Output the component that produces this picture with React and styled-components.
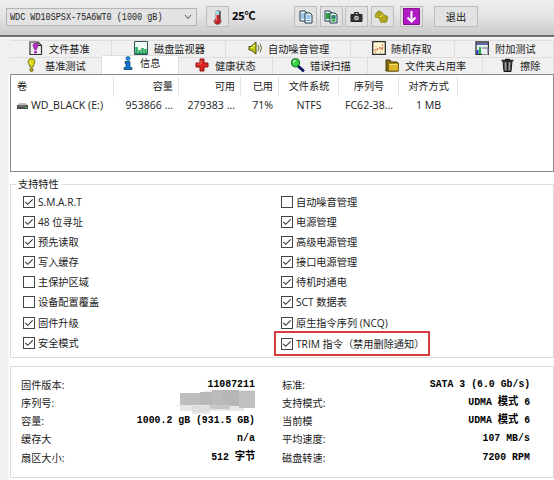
import React from 'react';
import styled, { createGlobalStyle } from 'styled-components';

const GlobalStyle = createGlobalStyle`
  * { box-sizing: border-box; }
  body {
    margin: 0;
    background: #fff;
    overflow: hidden;
    color: #222;
    font: 10.2px/14px "Open Sans", "Noto Sans CJK SC", sans-serif;
  }
`;

const Window = styled.div`
  width: 554px;
  height: 480px;
  overflow: hidden;
  white-space: nowrap;
  background: #f0f0f0;
  display: flex;
  flex-direction: column;
`;

const Toolbar = styled.header`
  height: 37px;
  flex: none;
  display: flex;
  align-items: flex-start;
  padding: 6px 0 0 6px;
  background: linear-gradient(#eeeeee, #e4e4e4 45%, #cbcbcb);
  border-bottom: 2px solid #6d6d6d;
`;

const DriveSelect = styled.div`
  width: 191px;
  height: 18px;
  margin: 2px 9px 0 0;
  padding: 0 4px 0 3px;
  display: flex;
  align-items: center;
  justify-content: space-between;
  border: 1px solid #b4b4b4;
  background: #e3e3e3;
`;

const Mono = styled.span`
  display: inline-block;
  font: ${p => (p.$bold ? 'bold 11px' : '11px')}/14px "Liberation Mono", "Noto Sans CJK SC", monospace;
  color: ${p => (p.$bold ? '#000' : '#222')};
  transform: scaleX(${p => (p.$bold ? 0.895 : 0.77)});
  transform-origin: ${p => (p.$bold ? 'right' : 'left')} center;
`;

const DriveName = styled.div`
  width: 155px;
  margin-top: -1px;
`;

const ToolButton = styled.div`
  width: ${p => p.$w || 23}px;
  height: 21px;
  margin-right: ${p => p.$gap ?? 2.5}px;
  display: flex;
  align-items: center;
  justify-content: center;
  border: 1px solid #bdbdbd;
  background: #e2e2e2;
  color: #111;
`;

const Temperature = styled.div`
  width: 62px;
  height: 21px;
  font: bold 11px/20px "Open Sans", "Noto Sans CJK SC", sans-serif;
  color: #000;
`;

const TabStrip = styled.nav`
  flex: none;
  height: 37px;
  padding: 2px 0 0 10px;
  border-top: 1px solid #fafafa;
`;

const TabRow = styled.div`
  display: flex;
  height: 17px;
`;

const Tab = styled.div`
  width: ${p => p.$w}px;
  flex: none;
  height: ${p => (p.$on ? 20 : 17)}px;
  margin-top: ${p => (p.$on ? -2 : 0)}px;
  padding-left: ${p => p.$pad}px;
  padding-bottom: ${p => (p.$on ? 5 : 1)}px;
  display: flex;
  align-items: center;
  border: solid #dedede;
  border-width: 1px 1px 0 0;
  background: ${p => (p.$on ? '#fff' : '#f0f0f0')};
`;

const TabIcon = styled.span`
  width: ${p => p.$w}px;
  height: 15px;
  flex: none;
  display: flex;
`;

const Page = styled.main`
  flex: 1;
  margin-left: 8px;
  padding: 0 0 0 2px;
  background: #fff;
  border-left: 1px solid #f7f7f7;
`;

const VolumeList = styled.section`
  height: 98px;
  margin-left: -1px;
  border: 1px solid #8a8a8a;
`;

const VolumeRow = styled.div`
  display: grid;
  grid-template-columns: 103px 65px 62px 38px 60px 60px 59px;
  height: ${p => (p.$head ? 22 : 16)}px;
  padding-top: ${p => (p.$head ? 2 : 0)}px;
`;

const Cell = styled.div`
  height: ${p => (p.$head ? 20 : 16)}px;
  padding: ${p => (p.$head ? 2 : 1)}px 5px 0 6px;
  display: flex;
  gap: 3px;
  font-size: ${p => (p.$head ? 10.2 : 10.6)}px;
  justify-content: ${p => p.$align || 'center'};
  border-right: 1px solid ${p => (p.$head ? '#e3e3e3' : 'transparent')};
`;

const Features = styled.fieldset`
  height: 181px;
  min-width: 0;
  margin: 5px 0 0 -1px;
  padding: 0 0 0 12px;
  border: 1px solid #dcdcdc;
`;

const Legend = styled.legend`
  margin-left: -7px;
  padding: 0 2px;
  height: 14px;
`;

const FeatureGrid = styled.div`
  display: grid;
  grid-template-columns: 258px 1fr;
  grid-template-rows: 20px 20px 20px 19px 21px 19px 24px 16px;
  padding-top: 1px;
`;

const Feature = styled.div`
  display: flex;
  align-items: center;
  align-self: center;
  gap: 3px;
  height: 14px;
`;

const Box = styled.span`
  width: 12px;
  height: 12px;
  flex: none;
  display: flex;
  border: 1px solid #444;
  background: #fff;
`;

const Highlight = styled.div`
  width: 156px;
  height: 25px;
  margin: -4px 0 -5px -7px;
  padding-left: 5px;
  align-self: center;
  display: flex;
  align-items: center;
  border: 2px solid #d83b40;
`;

const Details = styled.section`
  height: 112px;
  margin: 8px 0 0 -1px;
  padding: 9px 23px 0 10px;
  display: grid;
  grid-template-columns: 234px 248px;
  column-gap: 27px;
  border: 1px solid #dcdcdc;
`;

const DetailColumn = styled.div`
  display: grid;
  grid-template-rows: 18px 18px 18px 19px 18px;
`;

const Detail = styled.div`
  display: flex;
  justify-content: space-between;
  padding-top: 2px;
`;

const Value = styled.div`
  height: 14px;
  margin-top: ${p => (p.$raised ? -6 : -2)}px;
`;

const Han = styled.span`
  font-size: 11.5px;
`;

const I = ({ w = 14, h = 14, children }) => (
  <svg width={w} height={h} viewBox={`0 0 ${w} ${h}`} fill="none">{children}</svg>
);

const Chevron = () => <I w={8} h={6}><path d="M1 1l3 3.5L7 1" stroke="#666" strokeWidth="1.1" /></I>;
const Thermometer = () => (
  <I w={9} h={16}>
    <path d="M3 2.500q2-2 4 0v7q1.500 1.500 1 3.500-1 2.500-3.500 2.500T1 13q-.3-2 2-3.500z" fill="#c32226" stroke="#666" strokeWidth=".7" />
    <path d="M3 2h3.500v4H3z" fill="#9fdcec" /><path d="M3.500 6v5L2.500 12.500" stroke="#ff7b6e" />
    <path d="M7 2v8" stroke="#333" />
  </I>
);
const Copy = ({ green }) => (
  <I>
    <path d="M1 1h5l2 2v8H1z" fill="#f2f7fa" stroke="#1e3b4c" />
    <path d="M2 4h4M2 6h4M2 8h4" stroke={green ? '#27a63d' : '#4b93db'} strokeWidth={green ? 2 : 1.2} />
    <path d="M6 3h5l2 2v8H6z" fill="#eef8fd" stroke="#1e3b4c" />
    <path d="M7.500 6h4M7.500 8h4M7.500 10.500h4" stroke={green ? '#259732' : '#3f91e5'} strokeWidth={green ? 2 : 1.2} />
    {green && <path d="M7 7h5" stroke="#3d6fc8" />}
  </I>
);
const Camera = () => (
  <I w={13} h={12}>
    <path d="M1 3.500h3l.7-2h3.600l.7 2h3v7H1z" fill="#333" stroke="#222" />
    <circle cx="6.500" cy="7" r="2.300" fill="#d5d5d5" /><circle cx="6.500" cy="7" r="1.100" fill="#555" />
    <path d="M5.500 2.500h2" stroke="#ddd" />
  </I>
);
const Gears = () => (
  <I>
    <path d="M3 1l2 .5 2 1 1.500 2 1.500 1 2 .5 1 2-1 1.500 0 2-2 1-2-.5-2 .5-1-2-.5-2-2-1-2 0L0 5l1-1z" fill="#b9ad18" stroke="#827b10" strokeWidth=".8" />
    <circle cx="4" cy="4.500" r="1.200" fill="#ddd25c" stroke="#746d0d" strokeWidth=".6" />
    <circle cx="9" cy="9" r="1.400" fill="#ddd25c" stroke="#746d0d" strokeWidth=".6" />
    <path d="M5 7l3-2" stroke="#f0e750" />
  </I>
);
const Down = () => (
  <I w={17} h={17}>
    <path d="M.5.500h16v16H.5z" fill="#b21ac5" stroke="#84118e" />
    <path d="M8.500 3v10M4.500 9.500l4 4 4-4" stroke="#fff" strokeWidth="2" />
  </I>
);
const FileBang = () => (
  <I>
    <path d="M1 1h8l3.500 3.500V13.500H1z" fill="#eee" stroke="#333" strokeWidth="1.2" />
    <path d="M9 1v3.500h3.500" stroke="#333" /><path d="M4 4q.5-2 2.500-2t2.500 2L7.500 8.500h-2z" fill="#bd32cf" stroke="#6d1479" strokeWidth=".7" />
    <circle cx="6.500" cy="11" r="1.500" fill="#9c28ac" />
  </I>
);
const Bars = () => (
  <I>
    <path d="M.5.500h13v13H.5z" fill="#effcf4" stroke="#385460" />
    <path d="M2.500 13V6M5.500 13V9M8.500 13V7M11.500 13V8" stroke="#22a957" strokeWidth="2.400" />
    <path d="M1 12.500h12" stroke="#168c50" />
  </I>
);
const Speaker = () => (
  <I w={15}>
    <path d="M1 5.500h2l5-4.500v12L3 9H1z" fill="#c3ca19" stroke="#454900" />
    <path d="M3 7l4-3" stroke="#f3f783" /><path d="M10 4q2 3 0 6M12 2.500q3 4.500 0 9" stroke="#6c6c31" />
  </I>
);
const Scatter = () => (
  <I>
    <path d="M.7.700h12.600v12.600H.7z" fill="#fff9cf" stroke="#303030" strokeWidth="1.300" />
    <path d="M2 10l2-2M4 5v1M5 10V8l1-1M7 8l1-2M9 6v3M10 9l1-3M11 3l-1 2M3 11h1M8 11h1" stroke="#df624b" />
  </I>
);
const ExtraChart = () => (
  <I>
    <path d="M1 1h12.500v12.500H1z" fill="#e9edf2" stroke="#333" strokeWidth="1.300" />
    <path d="M1 3h12" stroke="#333d91" strokeWidth="1.500" /><path d="M2.500 13V9" stroke="#2239c2" strokeWidth="2" />
    <path d="M5 13V6" stroke="#25ac43" strokeWidth="2" /><path d="M7 12h6" stroke="#e7ecf3" strokeWidth="3" />
    <path d="M7 7h6v6" stroke="#777" />
  </I>
);
const Bang = () => (
  <I w={9}>
    <path d="M1 3.500Q1.500.500 4.500.500T8 3.500L6 9H3z" fill="#d7d413" stroke="#64620a" strokeWidth=".8" />
    <path d="M3 3.500l1 3" stroke="#ffff83" /><circle cx="4.500" cy="11.800" r="1.700" fill="#b7b20b" stroke="#494707" strokeWidth=".7" />
  </I>
);
const Info = () => (
  <I w={10}>
    <circle cx="5" cy="2.500" r="2" fill="#168ae8" stroke="#07426f" strokeWidth=".6" />
    <path d="M2 5.500h5v6h2v2H1v-2h2v-4H2z" fill="#1374d7" stroke="#073963" strokeWidth=".7" />
  </I>
);
const Cross = () => (
  <I><path d="M5 1h4v4h4v4H9v4H5V9H1V5h4z" fill="#dc2423" stroke="#8e1513" /><path d="M6 2v4H2" stroke="#ff7770" strokeWidth=".8" /></I>
);
const Magnifier = () => (
  <I w={15}>
    <path d="M8 8l5 4.500" stroke="#101765" strokeWidth="3" strokeLinecap="round" />
    <circle cx="5.500" cy="4.800" r="4" fill="#37d543" stroke="#177c25" strokeWidth="1.200" />
    <path d="M3.500 4.500q.5-2 2-2" stroke="#d5ffd6" strokeWidth="1.300" />
  </I>
);
const FolderFile = () => (
  <I>
    <path d="M1 2h4l1 2h6l1 1v8H1z" fill="#86700e" stroke="#453908" />
    <path d="M3.500 5h10v8h-10z" fill="#deb72b" stroke="#735e0e" /><path d="M4 6.500h8" stroke="#f7df73" />
  </I>
);
const Trash = () => (
  <I w={13}>
    <path d="M2 3h9l-1 10.500H3z" fill="#555" stroke="#111" /><path d="M.5 2.500h12M4 1.500h5" stroke="#222" strokeWidth="1.600" />
    <path d="M4.500 4.500l.3 8M8.500 4.500l-.3 8" stroke="#aaa" /><path d="M6.500 4v9" stroke="#222" />
  </I>
);
const Drive = () => (
  <I w={11}><path d="M1 6l2-1h5l2 1v1H1z" fill="#bbb" /><path d="M0 7h11v4H0z" fill="#4b504d" /><path d="M1 8h8" stroke="#888" /><path d="M8 9.500h2" stroke="#4ac36c" /></I>
);
const Tick = () => <I w={10} h={10}><path d="M1.200 4.800l2.500 2.500 5-5" stroke="#333" strokeWidth="1.100" /></I>;
const Mosaic = () => (
  <I w={81} h={24}>
    <path d="M6 3h20l7-2 13-1h35v18H70v3H36v3H18v-3H6V17L1 15h5z" fill="#e8e8e8" />
    <path d="M6 3h21v12H6z" fill="#bdbdbd" /><path d="M26 2h12v13H26z" fill="#b8b8b8" />
    <path d="M38 0h11v16H38z" fill="#bcbcbc" /><path d="M49 0h16v16H49z" fill="#b6b6b6" />
    <path d="M65 1h16v17H65z" fill="#c0c0c0" /><path d="M36 15h20v4H36z" fill="#c7c7c7" />
    <path d="M18 16h18v6H18z" fill="#dedede" />
  </I>
);

const tabRows = [
  [
    [102, 19, FileBang, 20, '文件基准'], [114, 22, Bars, 20, '磁盘监视器'], [125, 22, Speaker, 20, '自动噪音管理'],
    [104, 21, Scatter, 19, '随机存取'], [99, 20, ExtraChart, 20, '附加测试'],
  ],
  [
    [92, 17, Bang, 18, '基准测试'], [77, 21, Info, 17, '信息', true], [94, 16, Cross, 20, '健康状态'],
    [95, 17, Magnifier, 20, '错误扫描'], [115, 17, FolderFile, 20, '文件夹占用率'], [71, 18, Trash, 19, '擦除'],
  ],
];

const columns = [
  ['卷', 'flex-start', <><Drive />WD_BLACK (E:)</>], ['容量', 'flex-end', '953866 ...'], ['可用', 'flex-end', '279383 ...'],
  ['已用', 'flex-end', '71%'], ['文件系统', 'center', 'NTFS'], ['序列号', 'center', 'FC62-38...'], ['对齐方式', 'center', '1 MB'],
];

const features = [
  ['S.M.A.R.T', true], ['自动噪音管理', false], ['48 位寻址', true], ['电源管理', true],
  ['预先读取', true], ['高级电源管理', true], ['写入缓存', true], ['接口电源管理', true],
  ['主保护区域', false], ['待机时通电', true], ['设备配置覆盖', false], ['SCT 数据表', true],
  ['固件升级', true], ['原生指令序列 (NCQ)', true], ['安全模式', true], ['TRIM 指令（禁用删除通知）', true, true],
];

const details = [
  [['固件版本:', '11087211'], ['序列号:', null], ['容量:', '1000.2 gB (931.5 GB)'], ['缓存大', 'n/a'], ['扇区大小:', <>512 <Han>字节</Han></>]],
  [['标准:', 'SATA 3 (6.0 Gb/s)'], ['支持模式:', <>UDMA <Han>模式</Han> 6</>], ['当前模', <>UDMA <Han>模式</Han> 6</>], ['平均速度:', '107 MB/s'], ['磁盘转速:', '7200 RPM']],
];

const Check = ({ label, on }) => (
  <Feature><Box>{on && <Tick />}</Box><span>{label}</span></Feature>
);

export default function App() {
  return (
    <Window>
      <GlobalStyle />
      <Toolbar>
        <DriveSelect>
          <DriveName><Mono>WDC WD10SPSX-75A6WT0 (1000 gB)</Mono></DriveName>
          <Chevron />
        </DriveSelect>
        <ToolButton $gap={3}><Thermometer /></ToolButton>
        <Temperature>25℃</Temperature>
        <ToolButton><Copy /></ToolButton>
        <ToolButton><Copy green /></ToolButton>
        <ToolButton><Camera /></ToolButton>
        <ToolButton $gap={6.5}><Gears /></ToolButton>
        <ToolButton $gap={11}><Down /></ToolButton>
        <ToolButton $w={44}>退出</ToolButton>
      </Toolbar>
      <TabStrip>
        {tabRows.map((row, i) => (
          <TabRow key={i}>
            {row.map(([w, pad, Icon, iw, label, on]) => (
              <Tab key={label} $w={w} $pad={pad} $on={on}>
                <TabIcon $w={iw}><Icon /></TabIcon>{label}
              </Tab>
            ))}
          </TabRow>
        ))}
      </TabStrip>
      <Page>
        <VolumeList>
          <VolumeRow $head>
            {columns.map(([name, align]) => <Cell key={name} $head $align={align}>{name}</Cell>)}
          </VolumeRow>
          <VolumeRow>
            {columns.map(([name, align, value]) => <Cell key={name} $align={align}>{value}</Cell>)}
          </VolumeRow>
        </VolumeList>
        <Features>
          <Legend>支持特性</Legend>
          <FeatureGrid>
            {features.map(([label, on, marked]) => marked
              ? <Highlight key={label}><Check label={label} on={on} /></Highlight>
              : <Check key={label} label={label} on={on} />)}
          </FeatureGrid>
        </Features>
        <Details>
          {details.map((column, i) => (
            <DetailColumn key={i}>
              {column.map(([label, value]) => (
                <Detail key={label}>
                  <span>{label}</span>
                  {value ? <Value><Mono $bold>{value}</Mono></Value> : <Value $raised><Mosaic /></Value>}
                </Detail>
              ))}
            </DetailColumn>
          ))}
        </Details>
      </Page>
    </Window>
  );
}
